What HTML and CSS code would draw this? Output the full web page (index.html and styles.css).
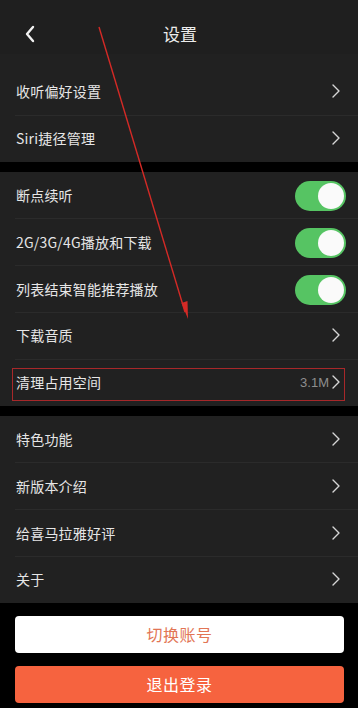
FILE: index.html
```html
<!DOCTYPE html>
<html lang="zh">
<head>
<meta charset="utf-8">
<link rel="stylesheet" href="styles.css">
</head>
<body>
<div class="page">
  <header class="nav">
    <svg class="back" width="12" height="18" viewBox="0 0 12 18"><path d="M9 2 L3 9 L9 16" fill="none" stroke="#f2f2f2" stroke-width="2.4" stroke-linecap="round" stroke-linejoin="round"/></svg>
    <div class="title">设置</div>
  </header>
  <section class="group first">
    <div class="row"><span class="label">收听偏好设置</span><svg class="chev" width="8" height="14" viewBox="0 0 8 14"><path d="M1 1 L7 7 L1 13" /></svg></div>
    <div class="row"><span class="label">Siri捷径管理</span><svg class="chev" width="8" height="14" viewBox="0 0 8 14"><path d="M1 1 L7 7 L1 13" /></svg></div>
  </section>
  <section class="group">
    <div class="row"><span class="label">断点续听</span><span class="switch"><span class="knob"></span></span></div>
    <div class="row"><span class="label">2G/3G/4G播放和下载</span><span class="switch"><span class="knob"></span></span></div>
    <div class="row"><span class="label">列表结束智能推荐播放</span><span class="switch"><span class="knob"></span></span></div>
    <div class="row"><span class="label">下载音质</span><svg class="chev" width="8" height="14" viewBox="0 0 8 14"><path d="M1 1 L7 7 L1 13" /></svg></div>
    <div class="row marked"><span class="label">清理占用空间</span><span class="value">3.1M</span><svg class="chev" width="8" height="14" viewBox="0 0 8 14"><path d="M1 1 L7 7 L1 13" /></svg><span class="mark"></span></div>
  </section>
  <section class="group">
    <div class="row"><span class="label">特色功能</span><svg class="chev" width="8" height="14" viewBox="0 0 8 14"><path d="M1 1 L7 7 L1 13" /></svg></div>
    <div class="row"><span class="label">新版本介绍</span><svg class="chev" width="8" height="14" viewBox="0 0 8 14"><path d="M1 1 L7 7 L1 13" /></svg></div>
    <div class="row"><span class="label">给喜马拉雅好评</span><svg class="chev" width="8" height="14" viewBox="0 0 8 14"><path d="M1 1 L7 7 L1 13" /></svg></div>
    <div class="row"><span class="label">关于</span><svg class="chev" width="8" height="14" viewBox="0 0 8 14"><path d="M1 1 L7 7 L1 13" /></svg></div>
  </section>
  <div class="actions">
    <div class="btn light">切换账号</div>
    <div class="btn primary">退出登录</div>
  </div>
  <svg class="arrow" width="358" height="708" viewBox="0 0 358 708">
    <path d="M99 27 L185 312" stroke="#d42a26" stroke-width="1.4" fill="none"/>
    <path d="M181.5 303 L188 319 L187.5 301 Z" fill="#d42a26"/>
  </svg>
</div>
</body>
</html>
```
FILE: styles.css
```css
html, body {
  margin: 0;
  padding: 0;
  background: #000;
}
.page {
  position: relative;
  width: 358px;
  height: 708px;
  overflow: hidden;
  background: #000;
  font-family: "Noto Sans CJK SC", "Noto Sans", sans-serif;
  color: #e4e4e4;
}
.nav {
  height: 54px;
  background: #1f1f1f;
  position: relative;
  display: flex;
  align-items: center;
  justify-content: center;
}
.back {
  position: absolute;
  left: 24px;
  top: 25px;
}
.title {
  font-size: 17px;
  color: #ececec;
  margin-top: 12px;
  margin-left: 2px;
}
.group {
  background: #212121;
  margin-bottom: 10px;
}
.group.first {
  padding-top: 14px;
  border-top: 1px solid #1a1a1a;
  margin-top: -1px;
}
.row {
  height: 46.8px;
  box-sizing: border-box;
  display: flex;
  align-items: center;
  padding: 0 17px 0 16px;
  position: relative;
}
.row + .row::before {
  content: "";
  position: absolute;
  left: 15px;
  right: 0;
  top: 0;
  height: 1px;
  background: #2b2b2b;
}
.label {
  flex: 1;
  font-size: 14px;
  letter-spacing: 0.2px;
  color: #e6e6e6;
}
.chev {
  display: block;
  fill: none;
  stroke: #d6d6d6;
  stroke-width: 1.4;
  stroke-linecap: round;
  stroke-linejoin: round;
  margin-right: 1px;
}
.value {
  font-family: "Liberation Sans", sans-serif;
  font-size: 13px;
  color: #8e8e8e;
  margin-right: 3px;
}
.switch {
  width: 51px;
  height: 30px;
  border-radius: 15px;
  background: #56c463;
  position: relative;
  margin-right: -5px;
  margin-top: 2px;
}
.knob {
  position: absolute;
  right: 2px;
  top: 2px;
  width: 26px;
  height: 26px;
  border-radius: 50%;
  background: #fafafa;
}
.mark {
  position: absolute;
  left: 12px;
  right: 13px;
  top: 9px;
  bottom: 5px;
  border: 1.5px solid #a8282a;
}
.actions {
  padding: 3px 14px 0 15px;
  display: flex;
  flex-direction: column;
  gap: 13px;
}
.btn {
  height: 37px;
  border-radius: 4px;
  display: flex;
  align-items: center;
  justify-content: center;
  font-size: 16px;
  letter-spacing: 0.5px;
}
.btn.light {
  background: #ffffff;
  color: #e27555;
}
.btn.primary {
  background: #f6633f;
  color: #ffffff;
}
.arrow {
  position: absolute;
  left: 0;
  top: 0;
  pointer-events: none;
}
```
